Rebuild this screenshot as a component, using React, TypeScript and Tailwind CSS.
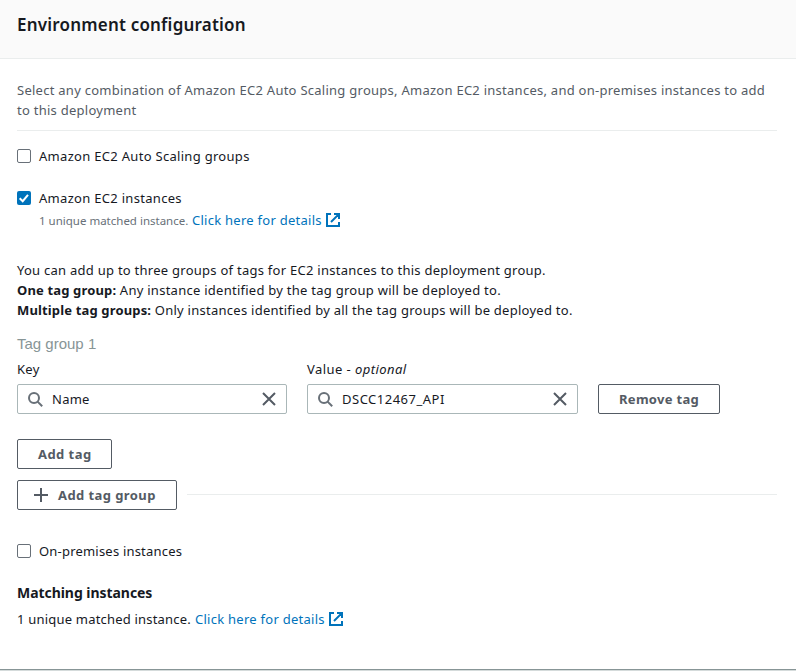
import React from 'react';

function Checkbox({ checked = false }: { checked?: boolean }) {
  return checked ? (
    <span className="flex size-3.5 shrink-0 rounded-[2px] bg-[#0073bb]">
      <svg viewBox="0 0 14 14" className="size-3.5" fill="none" stroke="#fff" strokeWidth="2">
        <path d="M2.7 7.2 5.7 10.2 11 3.8" />
      </svg>
    </span>
  ) : (
    <span className="size-3.5 shrink-0 rounded-[2px] border border-[#687078] bg-white" />
  );
}

function ExternalIcon() {
  return (
    <svg viewBox="0 0 14 14" className="size-3.5 shrink-0" fill="none" stroke="#0073bb" strokeWidth="2">
      <path d="M5 1H1v12h12V9M8 1h5v5M12.6 1.4 5 9" />
    </svg>
  );
}

function SearchInput({ value, width, spacing }: { value: string; width: string; spacing: string }) {
  return (
    <div className={`flex h-[30px] items-center rounded-[2px] border border-[#aab7b8] bg-white px-2.5 ${width}`}>
      <svg viewBox="0 0 15 15" className="size-[15px] shrink-0" fill="none" stroke="#687078" strokeWidth="2">
        <circle cx="6" cy="6" r="5" />
        <path d="m9.6 9.6 4.6 4.6" />
      </svg>
      <span className={`ml-[9px] flex-1 ${spacing}`}>{value}</span>
      <svg viewBox="0 0 14 14" className="size-3.5 shrink-0" fill="none" stroke="#545b64" strokeWidth="2">
        <path d="m1 1 12 12M13 1 1 13" />
      </svg>
    </div>
  );
}

function Button({ children, className }: { children: React.ReactNode; className: string }) {
  return (
    <button className={`flex h-[30px] shrink-0 items-center rounded-[2px] border border-[#545b64] bg-white font-bold text-[#545b64] ${className}`}>
      {children}
    </button>
  );
}

export default function App() {
  return (
    <div className="flex h-[671px] w-[796px] flex-col overflow-hidden whitespace-nowrap bg-white font-['Noto_Sans',sans-serif] text-[13px] leading-5 tracking-[0.26px] text-[#16191f]">
      <header className="flex h-[59px] shrink-0 items-start border-b border-[#eaeded] bg-[#fafafa] pl-[17px] pt-3.5">
        <h2 className="text-[17px] font-semibold leading-[22px] tracking-[0.2px]">Environment configuration</h2>
      </header>

      <main className="flex h-[610px] shrink-0 flex-col pl-[17px] pr-[19px]">
        <p className="mt-[21px] text-[#545b64]">
          Select any combination of Amazon EC2 Auto Scaling groups, Amazon EC2 instances, and on-premises instances to add
          <br />
          to this deployment
        </p>
        <hr className="mt-2.5 border-t border-[#eaeded]" />

        <div className="mt-[15px] flex h-5 items-center gap-2">
          <Checkbox />
          <span className="tracking-[0.3px]">Amazon EC2 Auto Scaling groups</span>
        </div>
        <div className="mt-[22px] flex h-5 items-center gap-2">
          <Checkbox checked />
          <span className="tracking-[0.3px]">Amazon EC2 instances</span>
        </div>
        <div className="mt-0.5 flex h-5 items-center pl-[22px]">
          <span className="w-[153px] pt-px text-[11.5px] tracking-normal text-[#687078]">1 unique matched instance.</span>
          <a className="w-[134px] text-[#0073bb]">Click here for details</a>
          <ExternalIcon />
        </div>

        <div className="mt-[30px]">
          <p>You can add up to three groups of tags for EC2 instances to this deployment group.</p>
          <p><b className="tracking-[0.15px]">One tag group:</b> Any instance identified by the tag group will be deployed to.</p>
          <p><b className="tracking-[0.15px]">Multiple tag groups:</b> Only instances identified by all the tag groups will be deployed to.</p>
        </div>

        <h3 className="mt-3.5 font-['Liberation_Sans',sans-serif] text-[15px] tracking-normal text-[#879596]">Tag group 1</h3>
        <div className="mt-[5px] flex items-end">
          <div className="w-[290px]">
            <div className="mb-[5px]">Key</div>
            <SearchInput value="Name" width="w-[270px]" spacing="tracking-[0.26px]" />
          </div>
          <div className="w-[291px]">
            <div className="mb-[5px] tracking-[0.44px]">Value - <i>optional</i></div>
            <SearchInput value="DSCC12467_API" width="w-[271px]" spacing="tracking-[0.5px]" />
          </div>
          <Button className="w-[122px] pl-5 tracking-[0.3px]">Remove tag</Button>
        </div>

        <div className="mt-[25px]">
          <Button className="w-[95px] pl-5 tracking-[0.45px]">Add tag</Button>
        </div>
        <div className="mt-[11px] flex">
          <Button className="w-[160px] pl-4 tracking-[0.42px]">
            <svg viewBox="0 0 14 14" className="mr-2.5 size-3.5" stroke="#545b64" strokeWidth="2">
              <path d="M7 0v14M0 7h14" />
            </svg>
            Add tag group
          </Button>
          <hr className="ml-2.5 mt-3.5 flex-1 border-t border-[#eaeded]" />
        </div>

        <div className="mt-[31px] flex h-5 items-center gap-2">
          <Checkbox />
          <span className="tracking-[0.2px]">On-premises instances</span>
        </div>
        <h3 className="mt-[22px] text-[14px] font-bold leading-5 tracking-[-0.05px]">Matching instances</h3>
        <div className="mt-1.5 flex h-5 items-center">
          <span className="w-[178px] tracking-[0.2px]">1 unique matched instance.</span>
          <a className="w-[134px] text-[#0073bb]">Click here for details</a>
          <ExternalIcon />
        </div>
      </main>
      <footer className="h-0.5 shrink-0 border-t border-[#879596] bg-[#d5dbdb]" />
    </div>
  );
}
